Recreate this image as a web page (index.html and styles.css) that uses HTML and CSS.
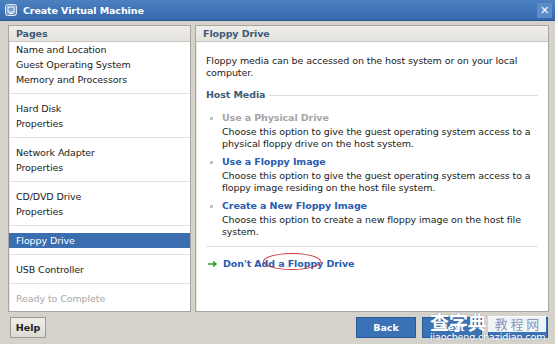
FILE: index.html
```html
<!DOCTYPE html>
<html lang="en">
<head>
  <meta charset="UTF-8">
  <title>Create Virtual Machine</title>
  <link rel="stylesheet" href="styles.css">
</head>
<body>
  <div class="ventana">
    <div class="titulo">
      <svg class="titulo-icono" width="12" height="12" viewBox="0 0 12 12">
        <rect x="0.5" y="0.5" width="11" height="11" rx="2" fill="#6f97c9" stroke="#dfe8f3"/>
        <rect x="3" y="3" width="6" height="5" fill="none" stroke="#fff" stroke-width="1"/>
        <path d="M4 9.5h4" stroke="#fff"/>
      </svg>
      <span>Create Virtual Machine</span>
      <span class="cerrar">✕</span>
    </div>

    <div class="cuerpo">
      <div class="panel paginas">
        <div class="panel-cab">Pages</div>
        <div class="lista">
          <div class="grupo primero">
            <div>Name and Location</div>
            <div>Guest Operating System</div>
            <div>Memory and Processors</div>
          </div>
          <div class="grupo">
            <div>Hard Disk</div>
            <div>Properties</div>
          </div>
          <div class="grupo">
            <div>Network Adapter</div>
            <div>Properties</div>
          </div>
          <div class="grupo">
            <div>CD/DVD Drive</div>
            <div>Properties</div>
          </div>
          <div class="grupo">
            <div class="activo">Floppy Drive</div>
          </div>
          <div class="grupo">
            <div>USB Controller</div>
          </div>
          <div class="grupo inactivo">
            <div>Ready to Complete</div>
          </div>
        </div>
      </div>

      <div class="panel detalle">
        <div class="panel-cab">Floppy Drive</div>
        <div class="contenido">
          <p class="intro">Floppy media can be accessed on the host system or on your local computer.</p>
          <div class="seccion"><span>Host Media</span></div>

          <div class="opcion deshabilitada">
            <div class="opcion-titulo"><i class="punto"></i>Use a Physical Drive</div>
            <p>Choose this option to give the guest operating system access to a physical floppy drive on the host system.</p>
          </div>
          <div class="opcion">
            <div class="opcion-titulo"><i class="punto"></i>Use a Floppy Image</div>
            <p>Choose this option to give the guest operating system access to a floppy image residing on the host file system.</p>
          </div>
          <div class="opcion">
            <div class="opcion-titulo"><i class="punto"></i>Create a New Floppy Image</div>
            <p>Choose this option to create a new floppy image on the host file system.</p>
          </div>

          <div class="no-agregar">
            <svg width="10" height="8" viewBox="0 0 10 8"><path d="M0 4h7M5 1.5l3 2.5-3 2.5" stroke="#2f9a2a" stroke-width="1.6" fill="none"/></svg>
            <span class="marca">Don't Add a Floppy Drive</span>
          </div>
        </div>
      </div>
    </div>

    <div class="pie">
      <button class="btn gris">Help</button>
      <div class="acciones">
        <button class="btn azul">Back</button>
        <button class="btn azul">Next</button>
        <button class="btn azul">Cancel</button>
      </div>
      <div class="agua">
        <span class="agua-grande">查字典</span><span class="agua-caja">教 程 网</span>
        <div class="agua-url">jiaocheng.chazidian.com</div>
      </div>
    </div>
  </div>
</body>
</html>
```

FILE: styles.css
```css
:root {
  --gris-fondo: #d5d2cb;
  --borde: #a9a6a0;
  --azul-link: #2a5cb0;
  --azul-cab: #3e5a78;
}
body {
  margin: 0;
  background: #fff;
  font-family: 'DejaVu Sans', Verdana, sans-serif;
  font-size: 9.5px;
  letter-spacing: -0.1px;
  color: #222;
}
.ventana {
  width: 555px;
  height: 344px;
  background: var(--gris-fondo);
  display: flex;
  flex-direction: column;
  position: relative;
  overflow: hidden;
}
.titulo {
  height: 20px;
  background: linear-gradient(#4c81c2, #3468ab);
  border-bottom: 1px solid #2a5690;
  display: flex;
  align-items: center;
  color: #fff;
  font-weight: bold;
  padding: 0 3px 0 5px;
}
.titulo-icono { margin-right: 6px; }
.cerrar {
  margin-left: auto;
  width: 15px;
  height: 15px;
  background: #5b8cc8;
  font-size: 11px;
  line-height: 15px;
  text-align: center;
}
.cuerpo {
  display: flex;
  gap: 4px;
  padding: 4px 6px 0 8px;
  height: 287px;
}
.panel {
  background: #fff;
  border: 1px solid var(--borde);
  box-shadow: inset 1px 1px 0 #ece9e4;
  display: flex;
  flex-direction: column;
}
.paginas { width: 181px; }
.detalle { flex: 1; }
.panel-cab {
  height: 15px;
  line-height: 15px;
  padding: 0 7px;
  background: linear-gradient(#efeee9, #e4e2dc);
  border-bottom: 1px solid #c9c6bf;
  color: var(--azul-cab);
  font-weight: bold;
}
.lista {
  flex: 1;
  line-height: 15px;
}
.grupo {
  padding: 7px 0 6px;
  border-top: 1px solid #e2e2e2;
}
.grupo div { padding: 0 7px; }
.grupo.primero {
  border-top: none;
  padding-top: 0;
}
.activo {
  background: #3a6eb0;
  color: #fff;
}
.inactivo { color: #a8a8a8; }

.contenido {
  padding: 13px 10px 0 10px;
  line-height: 12px;
}
.contenido p { margin: 0; }
.intro { margin-bottom: 10px !important; }
.seccion {
  display: flex;
  align-items: center;
  gap: 4px;
  color: var(--azul-cab);
  font-weight: bold;
  margin-bottom: 11px;
}
.seccion::after {
  content: "";
  flex: 1;
  border-top: 1px solid #dedede;
}
.opcion { margin-bottom: 6px; }
.opcion p { padding-left: 16px; }
.opcion-titulo {
  color: var(--azul-link);
  font-weight: bold;
  display: flex;
  align-items: center;
  margin-bottom: 2px;
}
.punto {
  width: 3px;
  height: 3px;
  background: #c3c3c3;
  margin: 0 9px 0 4px;
}
.deshabilitada .opcion-titulo { color: #a5a5a5; }
.no-agregar {
  border-top: 1px solid #dedede;
  margin-top: 8px;
  padding-top: 11px;
  display: flex;
  align-items: center;
  gap: 5px;
  color: var(--azul-link);
  font-weight: bold;
  padding-left: 2px;
}
.marca { position: relative; }
.marca::after {
  content: "";
  position: absolute;
  left: 40px;
  top: -5px;
  width: 56px;
  height: 15px;
  border: 1px solid #d0343c;
  border-radius: 50%;
}

.pie {
  flex: 1;
  display: flex;
  align-items: flex-start;
  padding: 5px 7px 0 10px;
  position: relative;
}
.btn {
  font-family: inherit;
  font-size: 9.5px;
  font-weight: bold;
  height: 21px;
  border: 1px solid #888;
  padding: 0;
  cursor: pointer;
}
.gris {
  width: 36px;
  background: linear-gradient(#efeee9, #dcdad4);
  color: #222;
  border-color: #9c9a94;
}
.acciones {
  margin-left: auto;
  display: flex;
  gap: 6px;
}
.azul {
  width: 60px;
  background: #3a72b5;
  color: #fff;
  border-color: #2a5a98;
}
.agua {
  position: absolute;
  left: 430px;
  top: 0;
  color: #fff;
  font-family: 'Noto Sans CJK SC', sans-serif;
  text-shadow: 0 0 1px #4a6fa0;
}
.agua-grande {
  font-size: 19px;
  font-weight: bold;
  line-height: 20px;
  vertical-align: top;
}
.agua-caja {
  display: inline-block;
  background: rgba(255, 255, 255, 0.92);
  color: #8a97b8;
  text-shadow: none;
  font-size: 13px;
  line-height: 16px;
  padding: 0 7px;
  margin: 4px 0 0 1px;
  vertical-align: top;
}
.agua-url {
  font-family: 'DejaVu Sans', sans-serif;
  font-size: 9.5px;
  line-height: 10px;
}
```
